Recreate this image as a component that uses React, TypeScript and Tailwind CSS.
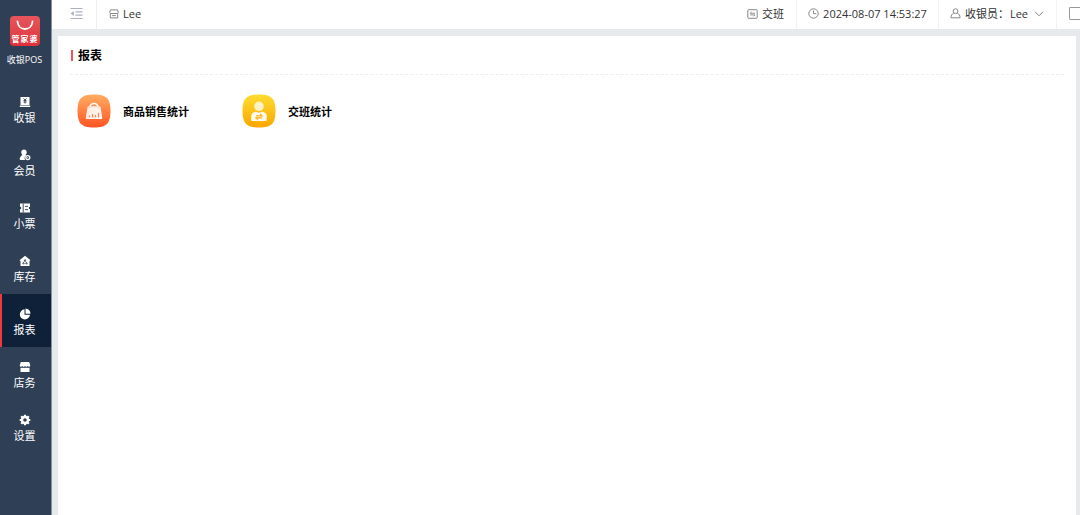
import type { ReactNode } from "react";

type NavItem = {
    label: string;
    icon: ReactNode;
    active?: boolean;
};

const navItems: NavItem[] = [
    {
        label: "收银",
        icon: (
            <>
                <path fill="#fff" d="M1.500 1h9v8h-9z" />
                <path fill="#fff" d="M.8 9.500h10.400V11H.8z" />
                <path stroke="#2f3f55" strokeWidth=".9" d="M4.600 2.500 6 4l1.400-1.500M6 4v3.500M4.500 4.600h3M4.500 6h3" />
            </>
        ),
    },
    {
        label: "会员",
        icon: (
            <>
                <circle cx="5" cy="3.200" r="2.700" fill="#fff" />
                <path fill="#fff" d="M3.500 5h3l.5 1.500C5.500 7.500 5.200 9.500 6.200 11H1.500C.6 11 .6 9.500 1 8.500 1.500 7.200 3 6.800 3.500 5z" />
                <circle cx="8.800" cy="8.600" r="2" stroke="#fff" strokeWidth="1.300" />
                <circle cx="8.800" cy="8.600" r=".6" fill="#fff" />
            </>
        ),
    },
    {
        label: "小票",
        icon: (
            <>
                <path fill="#fff" d="M1 1.500h10v3.200a1.300 1.300 0 0 0 0 2.600v3.200H1V7.300a1.300 1.300 0 0 0 0-2.600z" />
                <path stroke="#2f3f55" strokeWidth=".9" d="M4.200 1.500v9M6 4.400h3M6 7.600h3" />
            </>
        ),
    },
    {
        label: "库存",
        icon: (
            <>
                <path fill="#fff" d="M6 .8 11.500 5.300 10.500 6V11h-9V6L.5 5.300z" />
                <path stroke="#2f3f55" strokeWidth=".8" d="M6 4.500 5 6.200h2zM4.500 7.200 3.700 8.800h1.600zM7.500 7.200 6.700 8.800h1.600z" />
            </>
        ),
    },
    {
        label: "报表",
        active: true,
        icon: (
            <>
                <path fill="#fff" d="M5.500 1.200V6.700H11A5.100 5.100 0 1 1 5.500 1.200z" />
                <path fill="#fff" d="M6.500.5A5 5 0 0 1 11.500 5.700H6.500z" />
            </>
        ),
    },
    {
        label: "店务",
        icon: (
            <>
                <path fill="#fff" d="M1.800 1h8.400L11.200 4.200c0 1.800-2 2-2.600.9-.6 1.100-2 1.100-2.600 0-.6 1.100-2 1.100-2.600 0-.6 1.100-2.600.9-2.600-.9z" />
                <path fill="#fff" d="M1.500 6.800h9V11h-9z" />
            </>
        ),
    },
    {
        label: "设置",
        icon: (
            <>
                <circle cx="6" cy="6" r="3" stroke="#fff" strokeWidth="2.400" />
                <path stroke="#fff" strokeWidth="2.200" d="M6 .7v1.600M6 9.700v1.600M.7 6h1.600M9.700 6h1.600M2.200 2.200l1.200 1.200M8.600 8.600l1.200 1.200M2.200 9.800l1.200-1.200M8.600 3.400l1.200-1.200" />
            </>
        ),
    },
];

function Logo() {
    return (
        <div className="flex h-[30px] w-[30px] flex-col items-center justify-between rounded-[4px] bg-linear-to-b from-[#e5565c] to-[#e02f3a] pt-1 pb-[2px]">
            <svg width="18" height="11" viewBox="0 0 18 11" fill="none">
                <path d="M1.500 1.500c.8 10 14.200 10 15 0" stroke="#fff" strokeWidth="1.800" strokeLinecap="round" />
            </svg>
            <span className="flex gap-px text-[8px] leading-[10px] font-bold text-white">
                <span>管</span>
                <span>家</span>
                <span>婆</span>
            </span>
        </div>
    );
}

function Sidebar() {
    return (
        <aside className="flex w-[52px] shrink-0 flex-col border-r border-[#8793a3] bg-[#2f3f55] text-white">
            <div className="flex h-[82px] flex-col items-center gap-[6px] pt-4 pr-[2px]">
                <Logo />
                <span className="text-[9px] leading-4 whitespace-nowrap">收银POS</span>
            </div>
            <nav>
                {navItems.map((item) => (
                    <a
                        key={item.label}
                        href="#"
                        className={
                            item.active
                                ? "flex h-[53px] flex-col items-center border-l-2 border-[#f0393f] bg-[#0e2139] pt-[14px] pr-1"
                                : "flex h-[53px] flex-col items-center pt-[14px] pr-[2px]"
                        }
                    >
                        <svg width="12" height="12" viewBox="0 0 12 12" fill="none">{item.icon}</svg>
                        <span className="text-[11px] leading-5">{item.label}</span>
                    </a>
                ))}
            </nav>
        </aside>
    );
}

function Header() {
    return (
        <header className="flex h-[29px] shrink-0 items-stretch overflow-hidden bg-white text-[11px] leading-4 whitespace-nowrap text-[#333]">
            <button aria-label="收起菜单" className="flex w-[45px] items-center justify-center border-r border-[#eeeff1] pb-[2px] pl-[5px]">
                <svg width="13" height="13" viewBox="0 0 13 13" fill="none" stroke="#a9b0bf" strokeWidth="1.200">
                    <path d="M.5 1.500h12M5.500 4.800h7M5.500 8.200h7M.5 11.500h12" />
                    <path d="M3.800 4v5L.6 6.500z" fill="#a9b0bf" stroke="none" />
                </svg>
            </button>
            <div className="flex items-center gap-1 pb-[2px] pl-3">
                <svg width="10" height="10" viewBox="0 0 10 10" fill="none" stroke="#888">
                    <path d="M1.500.9h7l.8 2.300c0 1.300-1 1.300-1.300 1.300H2C1.700 4.500.7 4.500.7 3.200zM1.300 4.500v4.400h7.400V4.500M3.200 6.600h3.600" />
                </svg>
                <span>Lee</span>
            </div>
            <div className="ml-auto flex">
                <button className="flex items-center gap-1 border-r border-[#f1f2f3] px-3 pb-[2px]">
                    <svg width="11" height="10" viewBox="0 0 11 10" fill="none" stroke="#888">
                        <rect x=".8" y=".7" width="9.400" height="8.600" rx=".8" />
                        <path strokeWidth=".9" d="M8 4.300H3.200l1.400-1.500M3.200 5.900H8L6.600 7.300" />
                    </svg>
                    <span>交班</span>
                </button>
                <div className="flex items-center gap-1 border-r border-[#f1f2f3] px-[11px] pb-[2px]">
                    <svg width="11" height="11" viewBox="0 0 11 11" fill="none" stroke="#888">
                        <circle cx="5.500" cy="5.500" r="4.700" />
                        <path d="M5.500 2.500v3.200h2.800" />
                    </svg>
                    <time dateTime="2024-08-07T14:53:27">2024-08-07 14:53:27</time>
                </div>
                <button className="flex items-center border-r border-[#f1f2f3] pr-3 pb-[2px] pl-[11px]">
                    <svg width="11" height="11" viewBox="0 0 11 11" fill="none" stroke="#888">
                        <circle cx="5.500" cy="3.200" r="2.400" />
                        <path d="M3.600 5.400C1.700 6 1 7.500 1 9.800h9c0-2.300-.7-3.800-2.600-4.400" />
                    </svg>
                    <span className="mr-px ml-1">收银员：</span>
                    <span className="mr-[6px]">Lee</span>
                    <svg width="10" height="6" viewBox="0 0 10 6" fill="none" stroke="#888">
                        <path d="M1 .8l4 4 4-4" />
                    </svg>
                </button>
                <button aria-label="最大化" className="flex w-[23px] items-center overflow-hidden pb-[2px] pl-3">
                    <span className="h-[13px] w-4 shrink-0 rounded-[1px] border border-[#999]" />
                </button>
            </div>
        </header>
    );
}

function SalesIcon() {
    return (
        <svg width="34" height="34" viewBox="0 0 34 34" fill="none">
            <defs>
                <linearGradient id="sales" x1="0" y1="0" x2="0" y2="1">
                    <stop stopColor="#ffae62" />
                    <stop offset="1" stopColor="#ff5423" />
                </linearGradient>
                <linearGradient id="bag" x1="0" y1="0" x2="1" y2="1">
                    <stop stopColor="#fff" stopOpacity=".8" />
                    <stop offset="1" stopColor="#fff" />
                </linearGradient>
            </defs>
            <path fill="url(#sales)" d="M17 .5C29.500.5 33.500 4.500 33.500 17S29.500 33.500 17 33.500.5 29.500.5 17 4.500.5 17 .5z" />
            <path stroke="#fff" strokeWidth="1.400" d="M12.700 14c0-6 8.600-6 8.600 0" />
            <path fill="url(#bag)" d="M11.500 12.300h11c.6 0 .9.300 1 .8l1.700 10.700c.1.800-.3 1.200-1 1.200H9.800c-.7 0-1.100-.4-1-1.200l1.700-10.700c.1-.5.4-.8 1-.8z" />
            <path stroke="#ffb196" strokeWidth=".8" d="M13 12.500v1.500M21 12.500v1.500" />
            <path stroke="#ff8a58" strokeWidth="1.300" d="M12.500 23.500v-2M15.500 23.500v-3.500M18.500 23.500v-2.700M21.500 23.500v-4.700" />
        </svg>
    );
}

function ShiftIcon() {
    return (
        <svg width="34" height="34" viewBox="0 0 34 34" fill="none">
            <defs>
                <linearGradient id="shift" x1="0" y1="0" x2="0" y2="1">
                    <stop stopColor="#ffdc30" />
                    <stop offset="1" stopColor="#fba700" />
                </linearGradient>
            </defs>
            <path fill="url(#shift)" d="M17 .5C29.500.5 33.500 4.500 33.500 17S29.500 33.500 17 33.500.5 29.500.5 17 4.500.5 17 .5z" />
            <circle cx="17" cy="12.300" r="4.800" fill="#fff3c4" />
            <path fill="#fffaf0" d="M13.500 17.800 17 18.800l3.500-1c3 .6 4.300 2.200 4.300 4.700v3.500c0 .6-.3.900-.9.900H10.100c-.6 0-.9-.3-.9-.9v-3.500c0-2.500 1.300-4.100 4.300-4.700z" />
            <path stroke="#fbb010" strokeWidth="1.200" d="M14 21.800h6l-1.800-1.800M20 23.800h-6l1.800 1.800" />
        </svg>
    );
}

const reports = [
    { label: "商品销售统计", icon: <SalesIcon /> },
    { label: "交班统计", icon: <ShiftIcon /> },
];

export default function App() {
    return (
        <div className="flex min-h-screen bg-[#e7eaed] font-['Open_Sans','Noto_Sans_CJK_SC',sans-serif]">
            <Sidebar />
            <div className="flex min-w-0 flex-1 flex-col">
                <Header />
                <main className="mt-[7px] mr-1 ml-[6px] flex-1 bg-white px-3">
                    <div className="flex h-[39px] items-center gap-[5px] border-b border-dashed border-[#eeeeee] pt-px pl-px">
                        <span className="h-[11px] w-[2px] bg-[#f4535a]" />
                        <h1 className="text-xs font-bold text-black">报表</h1>
                    </div>
                    <div className="flex flex-wrap pt-[19px] pl-[7px]">
                        {reports.map((report) => (
                            <a key={report.label} href="#" className="flex w-[165px] items-center gap-3">
                                {report.icon}
                                <span className="pt-px text-[11px] leading-4 font-bold text-black">{report.label}</span>
                            </a>
                        ))}
                    </div>
                </main>
            </div>
        </div>
    );
}
